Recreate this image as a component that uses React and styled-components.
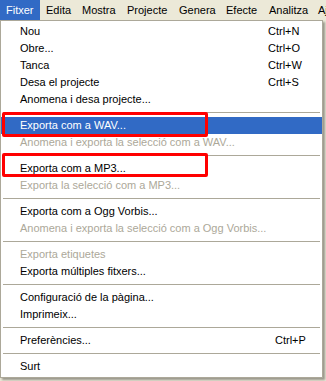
import React from "react";
import styled, { createGlobalStyle } from "styled-components";

const GlobalStyle = createGlobalStyle`
  html, body {
    margin: 0;
    padding: 0;
    background: #ece9d8;
  }
  body {
    font-family: Tahoma, "Liberation Sans", Arial, sans-serif;
    font-size: 11px;
  }
`;

const menuBar = [
  { label: "Fitxer", width: 40, open: true },
  { label: "Edita", width: 36 },
  { label: "Mostra", width: 45 },
  { label: "Projecte", width: 52 },
  { label: "Genera", width: 47 },
  { label: "Efecte", width: 43 },
  { label: "Analitza", width: 49 },
  { label: "Ajuda", width: 50 },
];

const groups = [
  [
    { label: "Nou", keys: "Ctrl+N" },
    { label: "Obre...", keys: "Ctrl+O" },
    { label: "Tanca", keys: "Ctrl+W" },
    { label: "Desa el projecte", keys: "Crtl+S" },
    { label: "Anomena i desa projecte..." },
  ],
  [
    { label: "Exporta com a WAV...", active: true, mark: { above: 5, below: 3 } },
    { label: "Anomena i exporta la selecció com a WAV...", disabled: true },
  ],
  [
    { label: "Exporta com a MP3...", mark: { above: 7, below: 0 } },
    { label: "Exporta la selecció com a MP3...", disabled: true },
  ],
  [
    { label: "Exporta com a Ogg Vorbis..." },
    { label: "Anomena i exporta la selecció com a Ogg Vorbis...", disabled: true },
  ],
  [
    { label: "Exporta etiquetes", disabled: true },
    { label: "Exporta múltiples fitxers..." },
  ],
  [
    { label: "Configuració de la pàgina..." },
    { label: "Imprimeix..." },
  ],
  [{ label: "Preferències...", keys: "Ctrl+P", keysAt: 275 }],
  [{ label: "Surt" }],
];

const Screen = styled.div`
  width: 326px;
  height: 381px;
  overflow: hidden;
  position: relative;
`;

const Bar = styled.div`
  display: flex;
  height: 20px;
  background: #ece9d8;
  white-space: nowrap;
`;

const BarItem = styled.div`
  flex: 0 0 ${(p) => p.$width}px;
  padding-left: 6px;
  line-height: 20px;
  box-sizing: border-box;
  color: ${(p) => (p.$open ? "#fff" : "#000")};
  background: ${(p) => (p.$open ? "#316ac5" : "transparent")};
`;

const Menu = styled.div`
  width: 323px;
  box-sizing: border-box;
  background: #fff;
  border: 1px solid #aca899;
  padding: 2px 0;
  box-shadow: 2px 2px 2px rgba(0, 0, 0, 0.35);
`;

const Row = styled.div`
  position: relative;
  display: flex;
  height: 17px;
  line-height: 17px;
  padding-left: 19px;
  white-space: nowrap;
  color: ${(p) => (p.$disabled ? "#aca899" : p.$active ? "#fff" : "#000")};
  background: ${(p) => (p.$active ? "#316ac5" : "transparent")};
`;

const Label = styled.span`
  flex: 1;
`;

const Keys = styled.span`
  position: absolute;
  left: ${(p) => p.$at - 1}px;
  top: 0;
`;

const Separator = styled.div`
  height: 1px;
  margin: 4px 2px;
  background: #aca899;
`;

const Mark = styled.div`
  position: absolute;
  left: 1px;
  width: 206px;
  top: -${(p) => p.$above}px;
  bottom: -${(p) => p.$below}px;
  border: 3px solid #ff0000;
  border-radius: 2px;
  box-sizing: border-box;
  z-index: 2;
`;

export default function App() {
  return (
    <Screen>
      <GlobalStyle />
      <Bar>
        {menuBar.map((m) => (
          <BarItem key={m.label} $width={m.width} $open={m.open}>
            {m.label}
          </BarItem>
        ))}
      </Bar>
      <Menu>
        {groups.map((group, gi) => (
          <React.Fragment key={gi}>
            {gi > 0 && <Separator />}
            {group.map((item) => (
              <Row key={item.label} $active={item.active} $disabled={item.disabled}>
                <Label>{item.label}</Label>
                {item.keys && <Keys $at={item.keysAt || 268}>{item.keys}</Keys>}
                {item.mark && <Mark $above={item.mark.above} $below={item.mark.below} />}
              </Row>
            ))}
          </React.Fragment>
        ))}
      </Menu>
    </Screen>
  );
}
